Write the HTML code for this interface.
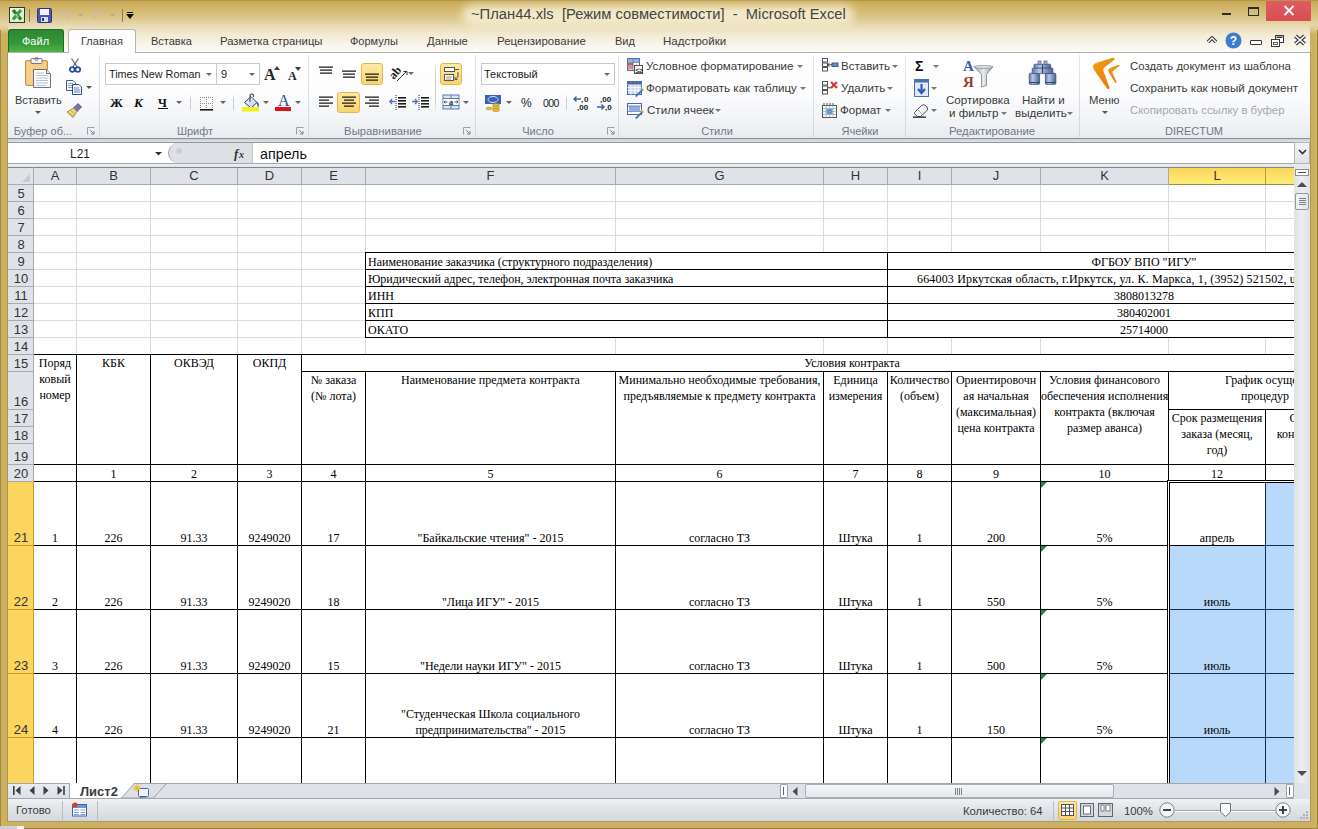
<!DOCTYPE html><html><head><meta charset="utf-8"><style>
html,body{margin:0;padding:0;width:1318px;height:829px;overflow:hidden;background:#cdb160}
div,svg{position:absolute}
div,svg{box-sizing:border-box}
</style></head><body>
<div style="left:0px;top:0px;width:1318px;height:52px;background:linear-gradient(to bottom,#a98c3f 0px,#c7a957 1.5px,#cdb060 4px,#d3b96f 10px,#dcc78b 18px,#e8dab3 26px,#f2e9d2 34px,#f8f4ea 44px,#fbfaf5 52px)"></div>
<div style="left:462px;top:5px;width:392px;height:20px;background:rgba(250,244,222,0.8);border-radius:10px;filter:blur(5px)"></div>
<div style="left:0px;top:24px;width:8px;height:805px;background:linear-gradient(to bottom,rgba(205,177,96,0) 0px,#cdb160 10px)"></div>
<div style="left:1310px;top:24px;width:8px;height:805px;background:linear-gradient(to bottom,rgba(205,177,96,0) 0px,#cdb160 10px)"></div>
<div style="left:0px;top:821px;width:1318px;height:8px;background:#cdb160"></div>
<div style="left:0px;top:30px;width:1px;height:799px;background:#a08a42"></div>
<div style="left:1317px;top:30px;width:1px;height:799px;background:#a08a42"></div>
<div style="left:7px;top:52px;width:1px;height:770px;background:#a99658"></div>
<div style="left:1310px;top:52px;width:1px;height:770px;background:#a99658"></div>
<div style="left:7px;top:821px;width:1304px;height:1px;background:#a99a66"></div>
<div style="left:0px;top:828px;width:1318px;height:1px;background:#a08040"></div>
<div style="left:0px;top:826px;width:17px;height:3px;background:#cfd3d8"></div>
<div style="left:17px;top:826px;width:7px;height:3px;background:#f2f2f0"></div>
<div style="left:471px;top:4px;font-family:'Liberation Sans', sans-serif;font-size:14.75px;line-height:20px;color:#46443c;white-space:pre;">~План44.xls  [Режим совместимости]  -  Microsoft Excel</div>
<div style="left:1266px;top:1px;width:45px;height:20px;background:linear-gradient(#df5c60,#d84d52)"></div>
<svg style="left:1283px;top:5px;" width="12" height="11" viewBox="0 0 12 11"><path d="M1.5 1L10.5 10M10.5 1L1.5 10" stroke="#fff" stroke-width="1.8"/></svg>
<div style="left:1248px;top:7px;width:11px;height:9px;border:1px solid #2b2b2b;border-top-width:2px"></div>
<div style="left:1222px;top:13px;width:9px;height:2px;background:#2b2b2b"></div>
<div style="left:8px;top:29px;width:56px;height:23px;background:linear-gradient(to bottom,#2b8733,#35973a 60%,#52b344);border-radius:3px 3px 0 0;border:1px solid #1d6b25;border-bottom:none"></div>
<div style="left:22px;top:31px;font-family:'Liberation Sans', sans-serif;font-size:11px;line-height:20px;color:#fff;white-space:pre;">Файл</div>
<div style="left:68px;top:29px;width:68px;height:24px;background:linear-gradient(to bottom,#fdfdfd,#ffffff);border:1px solid #b3b5b3;border-bottom:none;border-radius:3px 3px 0 0"></div>
<div style="left:81px;top:31px;font-family:'Liberation Sans', sans-serif;font-size:11px;line-height:20px;color:#3b3b3b;white-space:pre;">Главная</div>
<div style="left:151px;top:31px;font-family:'Liberation Sans', sans-serif;font-size:11px;line-height:20px;color:#3b3b3b;white-space:pre;">Вставка</div>
<div style="left:220px;top:31px;font-family:'Liberation Sans', sans-serif;font-size:11.3px;line-height:20px;color:#3b3b3b;white-space:pre;">Разметка страницы</div>
<div style="left:350px;top:31px;font-family:'Liberation Sans', sans-serif;font-size:11px;line-height:20px;color:#3b3b3b;white-space:pre;">Формулы</div>
<div style="left:427px;top:31px;font-family:'Liberation Sans', sans-serif;font-size:11.3px;line-height:20px;color:#3b3b3b;white-space:pre;">Данные</div>
<div style="left:497px;top:31px;font-family:'Liberation Sans', sans-serif;font-size:11.5px;line-height:20px;color:#3b3b3b;white-space:pre;">Рецензирование</div>
<div style="left:615px;top:31px;font-family:'Liberation Sans', sans-serif;font-size:11px;line-height:20px;color:#3b3b3b;white-space:pre;">Вид</div>
<div style="left:663px;top:31px;font-family:'Liberation Sans', sans-serif;font-size:11.5px;line-height:20px;color:#3b3b3b;white-space:pre;">Надстройки</div>
<svg style="left:1206px;top:35px;" width="12" height="10" viewBox="0 0 12 10"><path d="M2 7L6 3L10 7" stroke="#3a3a3a" stroke-width="3.6" fill="none" stroke-linejoin="round"/><path d="M2 7L6 3L10 7" stroke="#fff" stroke-width="1.4" fill="none"/></svg>
<svg style="left:1225px;top:32px;" width="17" height="17" viewBox="0 0 17 17"><circle cx="8.5" cy="8.5" r="8" fill="#3d7bd1"/><text x="8.5" y="13" font-family="Liberation Sans" font-weight="bold" font-size="12" fill="#fff" text-anchor="middle">?</text></svg>
<div style="left:1250px;top:40px;width:12px;height:5px;border:1px solid #333;background:#fff;border-radius:1px"></div>
<svg style="left:1270px;top:34px;" width="15" height="14" viewBox="0 0 15 14"><rect x="5.5" y="1.5" width="8" height="7" fill="#fff" stroke="#3a3a3a"/><rect x="6.5" y="2.5" width="6" height="1.5" fill="#3a3a3a"/><rect x="1.5" y="5.5" width="8" height="7" fill="#fff" stroke="#3a3a3a"/><rect x="3.5" y="8.5" width="4" height="2" fill="#fff" stroke="#3a3a3a" stroke-width="0.8"/></svg>
<svg style="left:1293px;top:34px;" width="14" height="12" viewBox="0 0 14 12"><path d="M2.5 2L11.5 10M11.5 2L2.5 10" stroke="#3a3a3a" stroke-width="3.8"/><path d="M2.5 2L11.5 10M11.5 2L2.5 10" stroke="#fff" stroke-width="1.6"/></svg>
<div style="left:8px;top:52px;width:1302px;height:87px;background:linear-gradient(to bottom,#ffffff 0%,#fdfdfe 45%,#f1f3f5 80%,#e9ecef 100%);border-top:1px solid #adb0b3;border-bottom:1px solid #8d9196"></div>
<div style="left:69px;top:52px;width:66px;height:1px;background:#fff"></div>
<div style="left:99px;top:55px;width:1px;height:82px;background:linear-gradient(to bottom,#e3e6ea,#d2d6db)"></div>
<div style="left:308px;top:55px;width:1px;height:82px;background:linear-gradient(to bottom,#e3e6ea,#d2d6db)"></div>
<div style="left:475px;top:55px;width:1px;height:82px;background:linear-gradient(to bottom,#e3e6ea,#d2d6db)"></div>
<div style="left:618px;top:55px;width:1px;height:82px;background:linear-gradient(to bottom,#e3e6ea,#d2d6db)"></div>
<div style="left:813px;top:55px;width:1px;height:82px;background:linear-gradient(to bottom,#e3e6ea,#d2d6db)"></div>
<div style="left:905px;top:55px;width:1px;height:82px;background:linear-gradient(to bottom,#e3e6ea,#d2d6db)"></div>
<div style="left:1079px;top:55px;width:1px;height:82px;background:linear-gradient(to bottom,#e3e6ea,#d2d6db)"></div>
<svg style="left:24px;top:57px;" width="28" height="32" viewBox="0 0 28 32"><rect x="1.5" y="3.5" width="22" height="25" rx="1.5" fill="#f2c46f" stroke="#c0924a"/><rect x="3" y="5" width="19" height="22" fill="#f6cf85"/><rect x="7" y="1.5" width="11" height="5" rx="1" fill="#f4f4f4" stroke="#7a7a7a"/><circle cx="12.5" cy="2" r="1.6" fill="none" stroke="#777"/><path d="M9.5 12.5H22.5L26.5 16.5V30.5H9.5Z" fill="#fdfdfd" stroke="#6f7378"/><path d="M22.5 12.5V16.5H26.5" fill="#e8e8e8" stroke="#6f7378"/><path d="M12 16H20M12 18.5H24M12 21H24M12 23.5H24M12 26H24M12 28.5H22" stroke="#9fb3cc" stroke-width="0.8"/></svg>
<div style="left:15px;top:89.5px;font-family:'Liberation Sans', sans-serif;font-size:11px;line-height:20px;color:#3a3a3a;white-space:pre;">Вставить</div>
<svg style="left:35px;top:110.5px" width="6" height="3" viewBox="0 0 6 3"><path d="M0 0H6L3 3Z" fill="#555"/></svg>
<svg style="left:69px;top:58px;" width="12" height="15" viewBox="0 0 12 15"><path d="M2.5 0.5L8.2 9M9.5 0.5L3.8 9" stroke="#6a6e74" stroke-width="1.3"/><circle cx="3.2" cy="11.5" r="2.4" fill="none" stroke="#2d4ea3" stroke-width="1.8"/><circle cx="8.8" cy="11.5" r="2.4" fill="none" stroke="#2d4ea3" stroke-width="1.8"/></svg>
<svg style="left:66px;top:80px;" width="17" height="15" viewBox="0 0 17 15"><path d="M0.5 0.5H7L9.5 3V10.5H0.5Z" fill="#fff" stroke="#3b5b9a"/><path d="M2 3.5H7M2 5.5H7M2 7.5H7" stroke="#6b89c2" stroke-width="0.8"/><path d="M6.5 4.5H13L15.5 7V14.5H6.5Z" fill="#f7f9fd" stroke="#2f4f8f"/><path d="M8 8H13M8 10H14M8 12H14" stroke="#5477c0" stroke-width="0.9"/></svg>
<svg style="left:86px;top:86.0px" width="6" height="3" viewBox="0 0 6 3"><path d="M0 0H6L3 3Z" fill="#555"/></svg>
<svg style="left:66px;top:101px;" width="18" height="17" viewBox="0 0 18 17"><path d="M12 2.5L15.5 6L11 10.5L7.5 7Z" fill="#7f6fb0" stroke="#4c3f7c" stroke-width="0.8"/><path d="M7.5 7L11 10.5L7 16.5L1 11Z" fill="#e9dc7e" stroke="#8c7a34" stroke-width="0.8"/><path d="M3 12L7.5 15M5 10L9.5 13" stroke="#b9a64a" stroke-width="0.8"/></svg>
<div style="left:-57px;top:121px;font-family:'Liberation Sans', sans-serif;font-size:11px;line-height:20px;color:#6e7886;white-space:pre;width:200px;text-align:center;">Буфер об...</div>
<svg style="left:87px;top:127px;" width="8" height="8" viewBox="0 0 8 8"><path d="M0.5 7.5V0.5H7.5" stroke="#98a0a8" fill="none"/><path d="M3 3L7 7M7 4V7H4" stroke="#7d858e" fill="none"/></svg>
<div style="left:105px;top:63px;width:112px;height:22px;background:#fff;border:1px solid #c6cad0"></div>
<div style="left:216px;top:63px;width:44px;height:22px;background:#fff;border:1px solid #c6cad0"></div>
<div style="left:109px;top:64px;font-family:'Liberation Sans', sans-serif;font-size:10.8px;line-height:20px;color:#1b1b1b;white-space:pre;">Times New Roman</div>
<svg style="left:206px;top:72.5px" width="6" height="3" viewBox="0 0 6 3"><path d="M0 0H6L3 3Z" fill="#6a6a6a"/></svg>
<div style="left:221px;top:64px;font-family:'Liberation Sans', sans-serif;font-size:11px;line-height:20px;color:#1b1b1b;white-space:pre;">9</div>
<svg style="left:249px;top:72.5px" width="6" height="3" viewBox="0 0 6 3"><path d="M0 0H6L3 3Z" fill="#6a6a6a"/></svg>
<div style="left:264px;top:65px;font-family:'Liberation Serif', serif;font-size:16px;line-height:20px;color:#262626;white-space:pre;font-weight:bold;">A</div>
<svg style="left:274px;top:66px;" width="6" height="4" viewBox="0 0 6 4"><path d="M0 4L3 0L6 4Z" fill="#3d3d3d"/></svg>
<div style="left:288px;top:66px;font-family:'Liberation Serif', serif;font-size:12px;line-height:20px;color:#262626;white-space:pre;font-weight:bold;">A</div>
<svg style="left:295px;top:67px;" width="6" height="4" viewBox="0 0 6 4"><path d="M0 0H6L3 4Z" fill="#3d3d3d"/></svg>
<div style="left:110px;top:92.5px;font-family:'Liberation Serif', serif;font-size:13px;line-height:20px;color:#111;white-space:pre;font-weight:bold;">Ж</div>
<div style="left:134px;top:92.5px;font-family:'Liberation Serif', serif;font-size:13px;line-height:20px;color:#111;white-space:pre;font-weight:bold;font-style:italic">К</div>
<div style="left:158px;top:92.5px;font-family:'Liberation Serif', serif;font-size:12px;line-height:20px;color:#111;white-space:pre;font-weight:bold;">Ч</div>
<div style="left:158px;top:108px;width:10px;height:1px;background:#111"></div>
<svg style="left:175.5px;top:100.5px" width="6" height="3" viewBox="0 0 6 3"><path d="M0 0H6L3 3Z" fill="#666"/></svg>
<div style="left:190px;top:95px;width:1px;height:17px;background:linear-gradient(to bottom,rgba(200,205,210,0),#c8cdd2 20%,#c8cdd2 80%,rgba(200,205,210,0))"></div>
<svg style="left:199px;top:96px;" width="15" height="15" viewBox="0 0 15 15"><path d="M1.5 1V14M7.5 1V14M13.5 1V14M1 1.5H14M1 7.5H14" stroke="#8c8c8c" stroke-width="1" stroke-dasharray="1 1"/><rect x="1" y="13" width="13" height="1.6" fill="#1a1a1a"/></svg>
<svg style="left:219.5px;top:100.5px" width="6" height="3" viewBox="0 0 6 3"><path d="M0 0H6L3 3Z" fill="#666"/></svg>
<div style="left:233px;top:95px;width:1px;height:17px;background:linear-gradient(to bottom,rgba(200,205,210,0),#c8cdd2 20%,#c8cdd2 80%,rgba(200,205,210,0))"></div>
<svg style="left:241px;top:93px;" width="19" height="19" viewBox="0 0 19 19"><defs><linearGradient id="bk" x1="0" y1="0" x2="1" y2="1"><stop offset="0" stop-color="#f4f8fd"/><stop offset="1" stop-color="#b9cde8"/></linearGradient></defs><path d="M3.5 9.5L10 3.5L16 9.5L10 15Z" fill="url(#bk)" stroke="#2d3d66" stroke-width="1"/><path d="M9 9V3Q9 0.8 11 1Q13 1.2 12.5 4" stroke="#3a4466" stroke-width="1.1" fill="none"/><path d="M15.5 8.5Q18.5 10 17.8 13.5L16.8 14L16 11Z" fill="#3f52c8"/><rect x="1" y="14" width="17" height="4.5" fill="#f0f01c"/></svg>
<svg style="left:262.5px;top:100.5px" width="6" height="3" viewBox="0 0 6 3"><path d="M0 0H6L3 3Z" fill="#666"/></svg>
<div style="left:278px;top:90.5px;font-family:'Liberation Serif', serif;font-size:16px;line-height:20px;color:#2a4d8f;white-space:pre;">A</div>
<div style="left:275px;top:107px;width:16px;height:4px;background:#e0101a"></div>
<svg style="left:295px;top:100.5px" width="6" height="3" viewBox="0 0 6 3"><path d="M0 0H6L3 3Z" fill="#666"/></svg>
<div style="left:95px;top:121px;font-family:'Liberation Sans', sans-serif;font-size:11px;line-height:20px;color:#6e7886;white-space:pre;width:200px;text-align:center;">Шрифт</div>
<svg style="left:296px;top:127px;" width="8" height="8" viewBox="0 0 8 8"><path d="M0.5 7.5V0.5H7.5" stroke="#98a0a8" fill="none"/><path d="M3 3L7 7M7 4V7H4" stroke="#7d858e" fill="none"/></svg>
<svg style="left:319px;top:66px;" width="20" height="20" viewBox="0 0 20 20"><rect x="0" y="0.5" width="14" height="1.25" fill="#1a1a1a"/><rect x="1" y="3.5" width="12" height="1.25" fill="#1a1a1a"/><rect x="1" y="6.5" width="12" height="1.25" fill="#1a1a1a"/></svg>
<svg style="left:342px;top:70px;" width="20" height="20" viewBox="0 0 20 20"><rect x="0" y="0.5" width="14" height="1.25" fill="#1a1a1a"/><rect x="1" y="3.5" width="12" height="1.25" fill="#1a1a1a"/><rect x="1" y="6.5" width="12" height="1.25" fill="#1a1a1a"/></svg>
<div style="left:361px;top:63px;width:22px;height:22px;background:linear-gradient(to bottom,#fde9a6,#f9d46c);border:1px solid #e1b552;border-radius:3px"></div>
<svg style="left:365px;top:73px;" width="20" height="20" viewBox="0 0 20 20"><rect x="0" y="0.5" width="14" height="1.25" fill="#1a1a1a"/><rect x="1" y="3.5" width="12" height="1.25" fill="#1a1a1a"/><rect x="1" y="6.5" width="12" height="1.25" fill="#1a1a1a"/></svg>
<svg style="left:390px;top:66px;" width="26" height="17" viewBox="0 0 26 17"><text x="0" y="0" font-family="Liberation Serif" font-size="12" font-weight="bold" fill="#222" transform="translate(4,14) rotate(-50)">ab</text><path d="M7 15L16 6" stroke="#333" stroke-width="1"/><path d="M13.5 5.5H17V9" stroke="#333" fill="none"/></svg>
<svg style="left:407.5px;top:71.5px" width="6" height="3" viewBox="0 0 6 3"><path d="M0 0H6L3 3Z" fill="#666"/></svg>
<div style="left:435px;top:63px;width:1px;height:49px;background:linear-gradient(to bottom,rgba(200,205,210,0),#c8cdd2 20%,#c8cdd2 80%,rgba(200,205,210,0))"></div>
<div style="left:440px;top:63px;width:22px;height:22px;background:linear-gradient(to bottom,#fde9a6,#f9d46c);border:1px solid #e1b552;border-radius:3px"></div>
<svg style="left:443px;top:66px;" width="17" height="16" viewBox="0 0 17 16"><rect x="1.5" y="1.5" width="10" height="4" fill="#fff" stroke="#555"/><path d="M11.5 3.5H16" stroke="#555"/><rect x="1.5" y="8.5" width="9" height="6" fill="#fff" stroke="#555"/><path d="M3 11H9M3 13H8" stroke="#777" stroke-width="0.8"/><path d="M15 6V11L12.5 13" stroke="#555" fill="none"/><path d="M12 11V13.5H14.5" stroke="#555" fill="none"/></svg>
<svg style="left:319px;top:96px;" width="20" height="20" viewBox="0 0 20 20"><rect x="0" y="0.5" width="14" height="1.25" fill="#1a1a1a"/><rect x="0" y="3.5" width="10" height="1.25" fill="#1a1a1a"/><rect x="0" y="6.5" width="14" height="1.25" fill="#1a1a1a"/><rect x="0" y="9.5" width="10" height="1.25" fill="#1a1a1a"/></svg>
<div style="left:337px;top:92px;width:23px;height:21px;background:linear-gradient(to bottom,#fde9a6,#f9d46c);border:1px solid #e1b552;border-radius:3px"></div>
<svg style="left:342px;top:96px;" width="20" height="20" viewBox="0 0 20 20"><rect x="0" y="0.5" width="14" height="1.25" fill="#1a1a1a"/><rect x="2" y="3.5" width="10" height="1.25" fill="#1a1a1a"/><rect x="0" y="6.5" width="14" height="1.25" fill="#1a1a1a"/><rect x="2" y="9.5" width="10" height="1.25" fill="#1a1a1a"/></svg>
<svg style="left:365px;top:96px;" width="20" height="20" viewBox="0 0 20 20"><rect x="0" y="0.5" width="14" height="1.25" fill="#1a1a1a"/><rect x="4" y="3.5" width="10" height="1.25" fill="#1a1a1a"/><rect x="0" y="6.5" width="14" height="1.25" fill="#1a1a1a"/><rect x="4" y="9.5" width="10" height="1.25" fill="#1a1a1a"/></svg>
<svg style="left:389px;top:94px;" width="18" height="17" viewBox="0 0 18 17"><path d="M7 1V16" stroke="#222" stroke-dasharray="1 1"/><rect x="9" y="3" width="8" height="1.6" fill="#1a1a1a"/><rect x="9" y="6" width="8" height="1.6" fill="#1a1a1a"/><rect x="9" y="9" width="8" height="1.6" fill="#1a1a1a"/><rect x="9" y="12" width="8" height="1.6" fill="#1a1a1a"/><path d="M1 7.5H6M3 5L0.8 7.5L3 10" stroke="#4a72c0" stroke-width="1.3" fill="none"/></svg>
<svg style="left:412px;top:94px;" width="18" height="17" viewBox="0 0 18 17"><path d="M7 1V16" stroke="#222" stroke-dasharray="1 1"/><rect x="9" y="3" width="8" height="1.6" fill="#1a1a1a"/><rect x="9" y="6" width="8" height="1.6" fill="#1a1a1a"/><rect x="9" y="9" width="8" height="1.6" fill="#1a1a1a"/><rect x="9" y="12" width="8" height="1.6" fill="#1a1a1a"/><path d="M0 7.5H5M3 5L5.3 7.5L3 10" stroke="#4a72c0" stroke-width="1.3" fill="none"/></svg>
<svg style="left:442px;top:94px;" width="18" height="16" viewBox="0 0 18 16"><rect x="1" y="1" width="16" height="14" fill="#dbe6f5" stroke="#5a7bb0"/><path d="M1 4.5H17M1 11.5H17M9 1V4.5M9 11.5V15" stroke="#5a7bb0"/><rect x="1.5" y="5" width="15" height="6" fill="#fff"/><text x="9" y="10.5" font-family="Liberation Serif" font-size="9" font-weight="bold" fill="#333" text-anchor="middle">a</text><path d="M2 8H5.5M12.5 8H16M2 8L3.5 6.8M2 8L3.5 9.2M16 8L14.5 6.8M16 8L14.5 9.2" stroke="#333" stroke-width="0.8"/></svg>
<svg style="left:462.5px;top:100.5px" width="6" height="3" viewBox="0 0 6 3"><path d="M0 0H6L3 3Z" fill="#666"/></svg>
<div style="left:283px;top:121px;font-family:'Liberation Sans', sans-serif;font-size:11.3px;line-height:20px;color:#6e7886;white-space:pre;width:200px;text-align:center;">Выравнивание</div>
<svg style="left:463px;top:127px;" width="8" height="8" viewBox="0 0 8 8"><path d="M0.5 7.5V0.5H7.5" stroke="#98a0a8" fill="none"/><path d="M3 3L7 7M7 4V7H4" stroke="#7d858e" fill="none"/></svg>
<div style="left:481px;top:63px;width:134px;height:22px;background:#fff;border:1px solid #c6cad0"></div>
<div style="left:484px;top:64px;font-family:'Liberation Sans', sans-serif;font-size:11px;line-height:20px;color:#1b1b1b;white-space:pre;">Текстовый</div>
<svg style="left:604px;top:72.5px" width="6" height="3" viewBox="0 0 6 3"><path d="M0 0H6L3 3Z" fill="#6a6a6a"/></svg>
<svg style="left:484px;top:94px;" width="18" height="18" viewBox="0 0 18 18"><rect x="1" y="1" width="16" height="9" fill="#3b63b5"/><ellipse cx="9" cy="5.5" rx="5" ry="3" fill="none" stroke="#cfe0ff" stroke-width="1"/><ellipse cx="12" cy="11" rx="3.5" ry="1.5" fill="#e9c23a" stroke="#a98419" stroke-width="0.6"/><ellipse cx="12" cy="13.5" rx="3.5" ry="1.5" fill="#e9c23a" stroke="#a98419" stroke-width="0.6"/><ellipse cx="12" cy="16" rx="3.5" ry="1.5" fill="#e9c23a" stroke="#a98419" stroke-width="0.6"/><ellipse cx="5" cy="14.5" rx="3" ry="1.3" fill="#e9c23a" stroke="#a98419" stroke-width="0.6"/></svg>
<svg style="left:506px;top:100.5px" width="6" height="3" viewBox="0 0 6 3"><path d="M0 0H6L3 3Z" fill="#666"/></svg>
<div style="left:521px;top:93px;font-family:'Liberation Sans', sans-serif;font-size:12px;line-height:20px;color:#222;white-space:pre;">%</div>
<div style="left:543px;top:93px;font-family:'Liberation Sans', sans-serif;font-size:10.5px;line-height:20px;color:#222;white-space:pre;letter-spacing:-0.6px;">000</div>
<div style="left:566px;top:95px;width:1px;height:17px;background:linear-gradient(to bottom,rgba(200,205,210,0),#c8cdd2 20%,#c8cdd2 80%,rgba(200,205,210,0))"></div>
<svg style="left:573px;top:95px;" width="18" height="16" viewBox="0 0 18 16"><text x="11" y="7" font-family="Liberation Sans" font-size="8" font-weight="bold" fill="#222">0</text><text x="4" y="15" font-family="Liberation Sans" font-size="8" font-weight="bold" fill="#222">,00</text><path d="M1 4H8M3.5 1.5L1 4L3.5 6.5" stroke="#3a5fb0" stroke-width="1.4" fill="none"/><text x="8" y="7" font-family="Liberation Sans" font-size="8" font-weight="bold" fill="#222">,</text></svg>
<svg style="left:596px;top:95px;" width="18" height="16" viewBox="0 0 18 16"><text x="4" y="7" font-family="Liberation Sans" font-size="8" font-weight="bold" fill="#222">,00</text><text x="9" y="15" font-family="Liberation Sans" font-size="8" font-weight="bold" fill="#222">,0</text><path d="M1 12H8M5.5 9.5L8 12L5.5 14.5" stroke="#3a5fb0" stroke-width="1.4" fill="none"/></svg>
<div style="left:438px;top:121px;font-family:'Liberation Sans', sans-serif;font-size:11px;line-height:20px;color:#6e7886;white-space:pre;width:200px;text-align:center;">Число</div>
<svg style="left:607px;top:127px;" width="8" height="8" viewBox="0 0 8 8"><path d="M0.5 7.5V0.5H7.5" stroke="#98a0a8" fill="none"/><path d="M3 3L7 7M7 4V7H4" stroke="#7d858e" fill="none"/></svg>
<svg style="left:626px;top:57px;" width="18" height="18" viewBox="0 0 18 18"><rect x="1.5" y="1.5" width="12" height="12" fill="#fff" stroke="#5a6f95"/><rect x="2" y="2" width="11" height="3" fill="#8fb0e0"/><rect x="2" y="6" width="5" height="2.5" fill="#d9534f"/><rect x="2" y="9.5" width="5" height="3" fill="#e08a86"/><path d="M1.5 5.5H13.5M1.5 9H13.5M7 1.5V13.5" stroke="#5a6f95" stroke-width="0.7"/><rect x="8.5" y="8.5" width="8" height="8" fill="#fff" stroke="#555"/><text x="9.5" y="15.5" font-family="Liberation Sans" font-size="7" font-weight="bold" fill="#333">≤≥</text></svg>
<div style="left:646px;top:56px;font-family:'Liberation Sans', sans-serif;font-size:11.6px;line-height:20px;color:#3a3a3a;white-space:pre;">Условное форматирование</div>
<svg style="left:797px;top:64.5px" width="6" height="3" viewBox="0 0 6 3"><path d="M0 0H6L3 3Z" fill="#777"/></svg>
<svg style="left:626px;top:80px;" width="18" height="18" viewBox="0 0 18 18"><rect x="1.5" y="1.5" width="14" height="13" fill="#c9d9f2" stroke="#4d6aa3"/><path d="M1.5 4.5H15.5M1.5 7.5H15.5M1.5 10.5H15.5M5 1.5V14.5M9 1.5V14.5M12.5 1.5V14.5" stroke="#fff" stroke-width="0.8"/><rect x="1.5" y="1.5" width="14" height="3" fill="#4d6aa3"/><path d="M9 16L16 9L17 10.5L10.5 17Z" fill="#3f6cc2"/><path d="M15 8L17.5 10.5" stroke="#8ac04a" stroke-width="1.5"/></svg>
<div style="left:646px;top:77.5px;font-family:'Liberation Sans', sans-serif;font-size:11.6px;line-height:20px;color:#3a3a3a;white-space:pre;">Форматировать как таблицу</div>
<svg style="left:800px;top:86.5px" width="6" height="3" viewBox="0 0 6 3"><path d="M0 0H6L3 3Z" fill="#777"/></svg>
<svg style="left:626px;top:102px;" width="18" height="18" viewBox="0 0 18 18"><rect x="1.5" y="1.5" width="14" height="11" fill="#fff" stroke="#4d6aa3"/><rect x="3" y="4" width="11" height="5" fill="#8fb0e0"/><path d="M1.5 4H15.5M1.5 9.5H15.5" stroke="#4d6aa3" stroke-width="0.7"/><path d="M9 16L16 9L17 10.5L10.5 17Z" fill="#3f6cc2"/><path d="M15 8L17.5 10.5" stroke="#e0b040" stroke-width="1.5"/></svg>
<div style="left:647px;top:99.5px;font-family:'Liberation Sans', sans-serif;font-size:11.6px;line-height:20px;color:#3a3a3a;white-space:pre;">Стили ячеек</div>
<svg style="left:715px;top:108.5px" width="6" height="3" viewBox="0 0 6 3"><path d="M0 0H6L3 3Z" fill="#777"/></svg>
<div style="left:617px;top:121px;font-family:'Liberation Sans', sans-serif;font-size:11px;line-height:20px;color:#6e7886;white-space:pre;width:200px;text-align:center;">Стили</div>
<svg style="left:821px;top:57px;" width="18" height="16" viewBox="0 0 18 16"><rect x="1.5" y="1.5" width="5" height="3.5" fill="#fff" stroke="#555"/><rect x="1.5" y="6" width="5" height="3.5" fill="#fff" stroke="#555"/><rect x="1.5" y="10.5" width="5" height="3.5" fill="#fff" stroke="#555"/><rect x="11" y="6" width="6" height="3.5" fill="#5b8bd0" stroke="#3a5f9a"/><path d="M6.5 7.8H11M8.5 6L6.5 7.8L8.5 9.5" stroke="#333" fill="none" stroke-width="0.9"/></svg>
<div style="left:841px;top:56px;font-family:'Liberation Sans', sans-serif;font-size:11.6px;line-height:20px;color:#3a3a3a;white-space:pre;">Вставить</div>
<svg style="left:892px;top:64.5px" width="6" height="3" viewBox="0 0 6 3"><path d="M0 0H6L3 3Z" fill="#777"/></svg>
<svg style="left:821px;top:80px;" width="18" height="16" viewBox="0 0 18 16"><rect x="1.5" y="1.5" width="5" height="3.5" fill="#fff" stroke="#555"/><rect x="1.5" y="6" width="5" height="3.5" fill="#fff" stroke="#555"/><rect x="1.5" y="10.5" width="5" height="3.5" fill="#fff" stroke="#555"/><path d="M6.5 7.8H10" stroke="#333"/><path d="M10 2L16 8M16 2L10 8" stroke="#e02b2b" stroke-width="2"/></svg>
<div style="left:841px;top:77.5px;font-family:'Liberation Sans', sans-serif;font-size:11.6px;line-height:20px;color:#3a3a3a;white-space:pre;">Удалить</div>
<svg style="left:887px;top:86.5px" width="6" height="3" viewBox="0 0 6 3"><path d="M0 0H6L3 3Z" fill="#777"/></svg>
<svg style="left:821px;top:102px;" width="17" height="17" viewBox="0 0 17 17"><rect x="1.5" y="3.5" width="14" height="12" fill="#fff" stroke="#555"/><path d="M1.5 6.5H15.5M1.5 9.5H15.5M1.5 12.5H15.5M5 3.5V15.5M8.5 3.5V15.5M12 3.5V15.5" stroke="#8aa" stroke-width="0.7"/><rect x="5.5" y="7" width="6" height="5" fill="#6f95d8"/><path d="M3 1V3M6 1V3M9 1V3M12 1V3" stroke="#555"/></svg>
<div style="left:840px;top:99.5px;font-family:'Liberation Sans', sans-serif;font-size:11.6px;line-height:20px;color:#3a3a3a;white-space:pre;">Формат</div>
<svg style="left:885px;top:108.5px" width="6" height="3" viewBox="0 0 6 3"><path d="M0 0H6L3 3Z" fill="#777"/></svg>
<div style="left:760px;top:121px;font-family:'Liberation Sans', sans-serif;font-size:11px;line-height:20px;color:#6e7886;white-space:pre;width:200px;text-align:center;">Ячейки</div>
<div style="left:915px;top:56px;font-family:'Liberation Sans', sans-serif;font-size:14px;line-height:20px;color:#111;white-space:pre;font-weight:bold;">Σ</div>
<svg style="left:933px;top:64.5px" width="6" height="3" viewBox="0 0 6 3"><path d="M0 0H6L3 3Z" fill="#777"/></svg>
<svg style="left:914px;top:79px;" width="15" height="18" viewBox="0 0 15 18"><rect x="0.5" y="0.5" width="14" height="17" fill="#dfe9f7" stroke="#4a6fb0"/><rect x="0.5" y="0.5" width="14" height="3" fill="#4a6fb0"/><path d="M7.5 5V13M4 10L7.5 14L11 10" stroke="#2d5cc0" stroke-width="2.2" fill="none"/></svg>
<svg style="left:931px;top:86.5px" width="6" height="3" viewBox="0 0 6 3"><path d="M0 0H6L3 3Z" fill="#777"/></svg>
<svg style="left:912px;top:102px;" width="18" height="16" viewBox="0 0 18 16"><path d="M2.5 10.5L9.5 3.5Q11.5 1.8 13.5 3.5L15 5Q16.5 7 14.8 8.8L8.5 14.5H5.5L2.5 11.8Z" fill="#f2f4f7" stroke="#4a4f57" stroke-width="1"/><path d="M5.5 7.5L10.5 12.5" stroke="#8a9098" stroke-width="0.8"/><rect x="1" y="14.5" width="13" height="1.3" fill="#222"/></svg>
<svg style="left:931px;top:108.5px" width="6" height="3" viewBox="0 0 6 3"><path d="M0 0H6L3 3Z" fill="#777"/></svg>
<svg style="left:961px;top:57px;" width="34" height="32" viewBox="0 0 34 32"><defs><linearGradient id="fn" x1="0" y1="0" x2="1" y2="0"><stop offset="0" stop-color="#9aa0a8"/><stop offset="0.5" stop-color="#e9ecef"/><stop offset="1" stop-color="#8d939b"/></linearGradient></defs><path d="M13 9.5H32L25.5 17.5V28.5L20.5 30V17.5Z" fill="url(#fn)" stroke="#7d838b" stroke-width="0.8"/><ellipse cx="22.5" cy="10" rx="9.5" ry="1.6" fill="#d5d9de" stroke="#7d838b" stroke-width="0.6"/><text x="2" y="14" font-family="Liberation Serif" font-size="15" font-weight="bold" fill="#3460b0">A</text><text x="2" y="30" font-family="Liberation Serif" font-size="15" font-weight="bold" fill="#9c3a2a">Я</text></svg>
<div style="left:946px;top:90px;font-family:'Liberation Sans', sans-serif;font-size:11.6px;line-height:20px;color:#3a3a3a;white-space:pre;">Сортировка</div>
<div style="left:949px;top:103px;font-family:'Liberation Sans', sans-serif;font-size:11.6px;line-height:20px;color:#3a3a3a;white-space:pre;">и фильтр</div>
<svg style="left:1001px;top:111.5px" width="6" height="3" viewBox="0 0 6 3"><path d="M0 0H6L3 3Z" fill="#777"/></svg>
<svg style="left:1028px;top:60px;" width="29" height="26" viewBox="0 0 29 26"><defs><linearGradient id="bn" x1="0" y1="0" x2="1" y2="0"><stop offset="0" stop-color="#6177a6"/><stop offset="0.35" stop-color="#b9c8e4"/><stop offset="1" stop-color="#4b6090"/></linearGradient></defs><rect x="1.2" y="13.1" width="10.4" height="11.3" rx="1.5" fill="url(#bn)" stroke="#34497a" stroke-width="0.7"/><rect x="17.3" y="13.1" width="10.6" height="11.3" rx="1.5" fill="url(#bn)" stroke="#34497a" stroke-width="0.7"/><rect x="4.2" y="7.9" width="20.7" height="5.7" rx="1" fill="url(#bn)" stroke="#34497a" stroke-width="0.7"/><rect x="6" y="4.2" width="16.7" height="3.8" rx="1" fill="url(#bn)" stroke="#34497a" stroke-width="0.7"/><rect x="10" y="1" width="3" height="3.2" fill="#aab8d8" stroke="#34497a" stroke-width="0.6"/><rect x="16" y="1" width="3" height="3.2" fill="#aab8d8" stroke="#34497a" stroke-width="0.6"/><path d="M14.5 4.5V13" stroke="#2a3b66" stroke-width="1"/><path d="M1.5 22.5H11.5M17.5 22.5H27.5" stroke="#2f416d" stroke-width="1.2"/></svg>
<div style="left:1022px;top:90px;font-family:'Liberation Sans', sans-serif;font-size:11.6px;line-height:20px;color:#3a3a3a;white-space:pre;">Найти и</div>
<div style="left:1015px;top:103px;font-family:'Liberation Sans', sans-serif;font-size:11.6px;line-height:20px;color:#3a3a3a;white-space:pre;">выделить</div>
<svg style="left:1067px;top:111.5px" width="6" height="3" viewBox="0 0 6 3"><path d="M0 0H6L3 3Z" fill="#777"/></svg>
<div style="left:892px;top:121px;font-family:'Liberation Sans', sans-serif;font-size:11.3px;line-height:20px;color:#6e7886;white-space:pre;width:200px;text-align:center;">Редактирование</div>
<svg style="left:1088px;top:54px;" width="36" height="40" viewBox="0 0 36 40"><defs><linearGradient id="og" x1="0" y1="0" x2="0.6" y2="1"><stop offset="0" stop-color="#f39c12"/><stop offset="1" stop-color="#e8800c"/></linearGradient></defs><path d="M26.5 5.5Q27.5 3 24 4L8 9Q4 10.5 5.5 15L19 34.5Q21.5 36.5 21.5 33.5L15.5 17Q14.5 14.5 17 13Z" fill="url(#og)"/><path d="M31.5 12Q32.5 10.5 30 11L22 14Q19.5 15 20.5 18L27 28.5Q28.8 29.5 28.3 27.5L24.5 19Q24 17 25.5 16.5Z" fill="url(#og)"/></svg>
<div style="left:1089px;top:90px;font-family:'Liberation Sans', sans-serif;font-size:11.3px;line-height:20px;color:#3a3a3a;white-space:pre;">Меню</div>
<svg style="left:1102px;top:110.5px" width="6" height="3" viewBox="0 0 6 3"><path d="M0 0H6L3 3Z" fill="#555"/></svg>
<div style="left:1130px;top:56px;font-family:'Liberation Sans', sans-serif;font-size:11.4px;line-height:20px;color:#3a3a3a;white-space:pre;">Создать документ из шаблона</div>
<div style="left:1130px;top:77.5px;font-family:'Liberation Sans', sans-serif;font-size:11.6px;line-height:20px;color:#3a3a3a;white-space:pre;">Сохранить как новый документ</div>
<div style="left:1130px;top:99.5px;font-family:'Liberation Sans', sans-serif;font-size:11.4px;line-height:20px;color:#a3a8ae;white-space:pre;">Скопировать ссылку в буфер</div>
<div style="left:1094px;top:121px;font-family:'Liberation Sans', sans-serif;font-size:11px;line-height:20px;color:#6e7886;white-space:pre;width:200px;text-align:center;">DIRECTUM</div>
<svg style="left:9px;top:7px;" width="16" height="16" viewBox="0 0 16 16"><defs><linearGradient id="xg" x1="0" y1="0" x2="1" y2="1"><stop offset="0" stop-color="#f4fcef"/><stop offset="1" stop-color="#cdeec2"/></linearGradient></defs><rect x="0.5" y="0.5" width="15" height="15" fill="url(#xg)" stroke="#2f3a2a"/><path d="M4 3L12 12.5" stroke="#2a7a30" stroke-width="3.2"/><path d="M12 3L4 12.5" stroke="#3f9a45" stroke-width="3"/><path d="M6.5 7L9.5 10.5" stroke="#9be08a" stroke-width="1.2"/></svg>
<div style="left:29px;top:9px;width:1px;height:13px;background:#8d7a52"></div>
<svg style="left:37px;top:8px;" width="15" height="15" viewBox="0 0 15 15"><rect x="0.5" y="0.5" width="14" height="14" rx="1" fill="#4a53b8" stroke="#2e3383"/><rect x="3" y="1" width="9" height="6" fill="#f2f2f7"/><rect x="4" y="9" width="7" height="5" fill="#dcdff0"/><rect x="5" y="10" width="2" height="3" fill="#2e3383"/></svg>
<svg style="left:59px;top:9px;" width="13" height="12" viewBox="0 0 13 12"><path d="M3 5Q6 1 9.5 3.5Q12 6 9 10" stroke="#c8bfa4" stroke-width="2.2" fill="none"/><path d="M0.5 2L4 7L6.5 2.5Z" fill="#c8bfa4"/></svg>
<svg style="left:77.5px;top:13.8px" width="5.0" height="2.5" viewBox="0 0 5.0 2.5"><path d="M0 0H5.0L2.5 2.5Z" fill="#b0a68a"/></svg>
<svg style="left:91px;top:9px;" width="13" height="12" viewBox="0 0 13 12"><path d="M10 5Q7 1 3.5 3.5Q1 6 4 10" stroke="#c8bfa4" stroke-width="2.2" fill="none"/><path d="M12.5 2L9 7L6.5 2.5Z" fill="#c8bfa4"/></svg>
<svg style="left:109.5px;top:13.8px" width="5.0" height="2.5" viewBox="0 0 5.0 2.5"><path d="M0 0H5.0L2.5 2.5Z" fill="#b0a68a"/></svg>
<div style="left:122px;top:9px;width:1px;height:13px;background:#8d7a52"></div>
<div style="left:127px;top:12px;width:6px;height:1px;background:#111"></div>
<svg style="left:126px;top:14px;" width="8" height="5" viewBox="0 0 8 5"><path d="M0 0H8L4 5Z" fill="#111"/></svg>
<div style="left:8px;top:139px;width:1302px;height:29px;background:linear-gradient(to bottom,#c9cdd2 0px,#e1e4ea 3px,#e1e4ea 25px,#f4f5f7 25px,#e5e7ea 26px)"></div>
<div style="left:8px;top:142px;width:1286px;height:22px;background:#fff;border-top:1px solid #92979d;border-bottom:1px solid #a3a8ae"></div>
<div style="left:70px;top:144px;font-family:'Liberation Sans', sans-serif;font-size:12px;line-height:20px;color:#1e1e1e;white-space:pre;">L21</div>
<svg style="left:154.5px;top:152.2px" width="7.0" height="3.5" viewBox="0 0 7.0 3.5"><path d="M0 0H7.0L3.5 3.5Z" fill="#333"/></svg>
<div style="left:168px;top:143px;width:85px;height:20px;background:#dde1e6;border-radius:10px 0 0 10px;border-left:1px solid #9ba0a6;border-right:1px solid #c3c7cc"></div>
<div style="left:174px;top:147px;width:10px;height:10px;background:radial-gradient(circle at 50% 40%,#bfc3c8,#e7e9ec 70%);border-radius:50%"></div>
<div style="left:234px;top:144px;font-family:'Liberation Serif', serif;font-size:13px;line-height:20px;color:#333;white-space:pre;font-style:italic;font-weight:bold">f</div>
<div style="left:239px;top:145px;font-family:'Liberation Serif', serif;font-size:10px;line-height:20px;color:#333;white-space:pre;font-style:italic;font-weight:bold">x</div>
<div style="left:260px;top:144px;font-family:'Liberation Sans', sans-serif;font-size:14.3px;line-height:20px;color:#111;white-space:pre;">апрель</div>
<div style="left:1294px;top:142px;width:16px;height:22px;background:linear-gradient(#f3f4f6,#dfe2e6);border:1px solid #b1b5ba"></div>
<svg style="left:1298px;top:149px;" width="9" height="6" viewBox="0 0 9 6"><path d="M1 1L4.5 4.5L8 1" stroke="#333" stroke-width="1.6" fill="none"/></svg>
<div style="left:8px;top:167px;width:1286px;height:18px;background:#dfe3e8"></div>
<div style="left:8px;top:167px;width:1286px;height:1px;background:#80858b"></div>
<div style="left:8px;top:184px;width:1286px;height:1px;background:#a7abb0"></div>
<div style="left:33px;top:167px;width:1px;height:616px;background:#a7abb0"></div>
<svg style="left:22px;top:174px;" width="8" height="8" viewBox="0 0 8 8"><path d="M8 0V8H0Z" fill="#c6cacf"/></svg>
<div style="left:8px;top:185px;width:25px;height:598px;background:#dfe3e8"></div>
<div style="left:1169px;top:168px;width:125px;height:16px;background:linear-gradient(to bottom,#fcd45a,#fde46c 60%,#fdeb78)"></div>
<div style="left:1169px;top:184px;width:125px;height:1px;background:#9c8c4c"></div>
<div style="left:1169px;top:167px;width:125px;height:1px;background:#8a8770"></div>
<div style="left:1168px;top:168px;width:1px;height:16px;background:#c9a042"></div>
<div style="left:1265px;top:168px;width:1px;height:16px;background:#b39a4a"></div>
<div style="left:76px;top:168px;width:1px;height:16px;background:#a7abb0"></div>
<div style="left:34px;top:166px;font-family:'Liberation Sans', sans-serif;font-size:13px;line-height:20px;color:#333;white-space:pre;width:42px;text-align:center;">A</div>
<div style="left:150px;top:168px;width:1px;height:16px;background:#a7abb0"></div>
<div style="left:77px;top:166px;font-family:'Liberation Sans', sans-serif;font-size:13px;line-height:20px;color:#333;white-space:pre;width:73px;text-align:center;">B</div>
<div style="left:237px;top:168px;width:1px;height:16px;background:#a7abb0"></div>
<div style="left:151px;top:166px;font-family:'Liberation Sans', sans-serif;font-size:13px;line-height:20px;color:#333;white-space:pre;width:86px;text-align:center;">C</div>
<div style="left:301px;top:168px;width:1px;height:16px;background:#a7abb0"></div>
<div style="left:238px;top:166px;font-family:'Liberation Sans', sans-serif;font-size:13px;line-height:20px;color:#333;white-space:pre;width:63px;text-align:center;">D</div>
<div style="left:365px;top:168px;width:1px;height:16px;background:#a7abb0"></div>
<div style="left:302px;top:166px;font-family:'Liberation Sans', sans-serif;font-size:13px;line-height:20px;color:#333;white-space:pre;width:63px;text-align:center;">E</div>
<div style="left:615px;top:168px;width:1px;height:16px;background:#a7abb0"></div>
<div style="left:366px;top:166px;font-family:'Liberation Sans', sans-serif;font-size:13px;line-height:20px;color:#333;white-space:pre;width:249px;text-align:center;">F</div>
<div style="left:823px;top:168px;width:1px;height:16px;background:#a7abb0"></div>
<div style="left:616px;top:166px;font-family:'Liberation Sans', sans-serif;font-size:13px;line-height:20px;color:#333;white-space:pre;width:207px;text-align:center;">G</div>
<div style="left:887px;top:168px;width:1px;height:16px;background:#a7abb0"></div>
<div style="left:824px;top:166px;font-family:'Liberation Sans', sans-serif;font-size:13px;line-height:20px;color:#333;white-space:pre;width:63px;text-align:center;">H</div>
<div style="left:951px;top:168px;width:1px;height:16px;background:#a7abb0"></div>
<div style="left:888px;top:166px;font-family:'Liberation Sans', sans-serif;font-size:13px;line-height:20px;color:#333;white-space:pre;width:63px;text-align:center;">I</div>
<div style="left:1040px;top:168px;width:1px;height:16px;background:#a7abb0"></div>
<div style="left:952px;top:166px;font-family:'Liberation Sans', sans-serif;font-size:13px;line-height:20px;color:#333;white-space:pre;width:88px;text-align:center;">J</div>
<div style="left:1168px;top:168px;width:1px;height:16px;background:#a7abb0"></div>
<div style="left:1041px;top:166px;font-family:'Liberation Sans', sans-serif;font-size:13px;line-height:20px;color:#333;white-space:pre;width:127px;text-align:center;">K</div>
<div style="left:1169px;top:166px;font-family:'Liberation Sans', sans-serif;font-size:13px;line-height:20px;color:#333;white-space:pre;width:96px;text-align:center;">L</div>
<div style="left:1266px;top:166px;font-family:'Liberation Sans', sans-serif;font-size:13px;line-height:20px;color:#333;white-space:pre;width:134px;text-align:center;">M</div>
<div style="left:8px;top:201px;width:25px;height:1px;background:#a7abb0"></div>
<div style="left:8px;top:184px;font-family:'Liberation Sans', sans-serif;font-size:13px;line-height:20px;color:#333;white-space:pre;width:26px;text-align:center;">5</div>
<div style="left:8px;top:218px;width:25px;height:1px;background:#a7abb0"></div>
<div style="left:8px;top:201px;font-family:'Liberation Sans', sans-serif;font-size:13px;line-height:20px;color:#333;white-space:pre;width:26px;text-align:center;">6</div>
<div style="left:8px;top:235px;width:25px;height:1px;background:#a7abb0"></div>
<div style="left:8px;top:218px;font-family:'Liberation Sans', sans-serif;font-size:13px;line-height:20px;color:#333;white-space:pre;width:26px;text-align:center;">7</div>
<div style="left:8px;top:252px;width:25px;height:1px;background:#a7abb0"></div>
<div style="left:8px;top:235px;font-family:'Liberation Sans', sans-serif;font-size:13px;line-height:20px;color:#333;white-space:pre;width:26px;text-align:center;">8</div>
<div style="left:8px;top:269px;width:25px;height:1px;background:#a7abb0"></div>
<div style="left:8px;top:252px;font-family:'Liberation Sans', sans-serif;font-size:13px;line-height:20px;color:#333;white-space:pre;width:26px;text-align:center;">9</div>
<div style="left:8px;top:286px;width:25px;height:1px;background:#a7abb0"></div>
<div style="left:8px;top:269px;font-family:'Liberation Sans', sans-serif;font-size:13px;line-height:20px;color:#333;white-space:pre;width:26px;text-align:center;">10</div>
<div style="left:8px;top:303px;width:25px;height:1px;background:#a7abb0"></div>
<div style="left:8px;top:286px;font-family:'Liberation Sans', sans-serif;font-size:13px;line-height:20px;color:#333;white-space:pre;width:26px;text-align:center;">11</div>
<div style="left:8px;top:320px;width:25px;height:1px;background:#a7abb0"></div>
<div style="left:8px;top:303px;font-family:'Liberation Sans', sans-serif;font-size:13px;line-height:20px;color:#333;white-space:pre;width:26px;text-align:center;">12</div>
<div style="left:8px;top:337px;width:25px;height:1px;background:#a7abb0"></div>
<div style="left:8px;top:320px;font-family:'Liberation Sans', sans-serif;font-size:13px;line-height:20px;color:#333;white-space:pre;width:26px;text-align:center;">13</div>
<div style="left:8px;top:354px;width:25px;height:1px;background:#a7abb0"></div>
<div style="left:8px;top:337px;font-family:'Liberation Sans', sans-serif;font-size:13px;line-height:20px;color:#333;white-space:pre;width:26px;text-align:center;">14</div>
<div style="left:8px;top:371px;width:25px;height:1px;background:#a7abb0"></div>
<div style="left:8px;top:354px;font-family:'Liberation Sans', sans-serif;font-size:13px;line-height:20px;color:#333;white-space:pre;width:26px;text-align:center;">15</div>
<div style="left:8px;top:409px;width:25px;height:1px;background:#a7abb0"></div>
<div style="left:8px;top:392px;font-family:'Liberation Sans', sans-serif;font-size:13px;line-height:20px;color:#333;white-space:pre;width:26px;text-align:center;">16</div>
<div style="left:8px;top:426px;width:25px;height:1px;background:#a7abb0"></div>
<div style="left:8px;top:409px;font-family:'Liberation Sans', sans-serif;font-size:13px;line-height:20px;color:#333;white-space:pre;width:26px;text-align:center;">17</div>
<div style="left:8px;top:443px;width:25px;height:1px;background:#a7abb0"></div>
<div style="left:8px;top:426px;font-family:'Liberation Sans', sans-serif;font-size:13px;line-height:20px;color:#333;white-space:pre;width:26px;text-align:center;">18</div>
<div style="left:8px;top:464px;width:25px;height:1px;background:#a7abb0"></div>
<div style="left:8px;top:447px;font-family:'Liberation Sans', sans-serif;font-size:13px;line-height:20px;color:#333;white-space:pre;width:26px;text-align:center;">19</div>
<div style="left:8px;top:481px;width:25px;height:1px;background:#a7abb0"></div>
<div style="left:8px;top:464px;font-family:'Liberation Sans', sans-serif;font-size:13px;line-height:20px;color:#333;white-space:pre;width:26px;text-align:center;">20</div>
<div style="left:8px;top:482px;width:25px;height:64px;background:#fbd55e"></div>
<div style="left:8px;top:545px;width:25px;height:1px;background:#c99a2e"></div>
<div style="left:33px;top:482px;width:1px;height:64px;background:#c99a2e"></div>
<div style="left:8px;top:528px;font-family:'Liberation Sans', sans-serif;font-size:13px;line-height:20px;color:#333;white-space:pre;width:26px;text-align:center;">21</div>
<div style="left:8px;top:546px;width:25px;height:64px;background:#fbd55e"></div>
<div style="left:8px;top:609px;width:25px;height:1px;background:#c99a2e"></div>
<div style="left:33px;top:546px;width:1px;height:64px;background:#c99a2e"></div>
<div style="left:8px;top:592px;font-family:'Liberation Sans', sans-serif;font-size:13px;line-height:20px;color:#333;white-space:pre;width:26px;text-align:center;">22</div>
<div style="left:8px;top:610px;width:25px;height:64px;background:#fbd55e"></div>
<div style="left:8px;top:673px;width:25px;height:1px;background:#c99a2e"></div>
<div style="left:33px;top:610px;width:1px;height:64px;background:#c99a2e"></div>
<div style="left:8px;top:656px;font-family:'Liberation Sans', sans-serif;font-size:13px;line-height:20px;color:#333;white-space:pre;width:26px;text-align:center;">23</div>
<div style="left:8px;top:674px;width:25px;height:64px;background:#fbd55e"></div>
<div style="left:8px;top:737px;width:25px;height:1px;background:#c99a2e"></div>
<div style="left:33px;top:674px;width:1px;height:64px;background:#c99a2e"></div>
<div style="left:8px;top:720px;font-family:'Liberation Sans', sans-serif;font-size:13px;line-height:20px;color:#333;white-space:pre;width:26px;text-align:center;">24</div>
<div style="left:8px;top:738px;width:25px;height:46px;background:#fbd55e"></div>
<div style="left:8px;top:801px;width:25px;height:1px;background:#c99a2e"></div>
<div style="left:33px;top:738px;width:1px;height:46px;background:#c99a2e"></div>
<div style="left:34px;top:185px;width:1260px;height:598px;background:#fff"></div>
<div style="left:1170px;top:546px;width:95px;height:237px;background:#b9d9fb"></div>
<div style="left:1266px;top:483px;width:28px;height:300px;background:#b9d9fb"></div>
<div style="left:76px;top:185px;width:1px;height:598px;background:#dadada"></div>
<div style="left:150px;top:185px;width:1px;height:598px;background:#dadada"></div>
<div style="left:237px;top:185px;width:1px;height:598px;background:#dadada"></div>
<div style="left:301px;top:185px;width:1px;height:598px;background:#dadada"></div>
<div style="left:365px;top:185px;width:1px;height:598px;background:#dadada"></div>
<div style="left:615px;top:185px;width:1px;height:598px;background:#dadada"></div>
<div style="left:823px;top:185px;width:1px;height:598px;background:#dadada"></div>
<div style="left:887px;top:185px;width:1px;height:598px;background:#dadada"></div>
<div style="left:951px;top:185px;width:1px;height:598px;background:#dadada"></div>
<div style="left:1040px;top:185px;width:1px;height:598px;background:#dadada"></div>
<div style="left:1168px;top:185px;width:1px;height:598px;background:#dadada"></div>
<div style="left:1265px;top:185px;width:1px;height:598px;background:#dadada"></div>
<div style="left:34px;top:201px;width:1260px;height:1px;background:#dadada"></div>
<div style="left:34px;top:218px;width:1260px;height:1px;background:#dadada"></div>
<div style="left:34px;top:235px;width:1260px;height:1px;background:#dadada"></div>
<div style="left:34px;top:252px;width:1260px;height:1px;background:#dadada"></div>
<div style="left:34px;top:269px;width:1260px;height:1px;background:#dadada"></div>
<div style="left:34px;top:286px;width:1260px;height:1px;background:#dadada"></div>
<div style="left:34px;top:303px;width:1260px;height:1px;background:#dadada"></div>
<div style="left:34px;top:320px;width:1260px;height:1px;background:#dadada"></div>
<div style="left:34px;top:337px;width:1260px;height:1px;background:#dadada"></div>
<div style="left:34px;top:354px;width:1260px;height:1px;background:#dadada"></div>
<div style="left:34px;top:371px;width:1260px;height:1px;background:#dadada"></div>
<div style="left:34px;top:409px;width:1260px;height:1px;background:#dadada"></div>
<div style="left:34px;top:426px;width:1260px;height:1px;background:#dadada"></div>
<div style="left:34px;top:443px;width:1260px;height:1px;background:#dadada"></div>
<div style="left:34px;top:464px;width:1260px;height:1px;background:#dadada"></div>
<div style="left:34px;top:481px;width:1260px;height:1px;background:#dadada"></div>
<div style="left:34px;top:545px;width:1260px;height:1px;background:#dadada"></div>
<div style="left:34px;top:609px;width:1260px;height:1px;background:#dadada"></div>
<div style="left:34px;top:673px;width:1260px;height:1px;background:#dadada"></div>
<div style="left:34px;top:737px;width:1260px;height:1px;background:#dadada"></div>
<div style="left:366px;top:253px;width:521px;height:84px;background:#fff"></div>
<div style="left:888px;top:253px;width:406px;height:84px;background:#fff"></div>
<div style="left:34px;top:355px;width:42px;height:109px;background:#fff"></div>
<div style="left:77px;top:355px;width:73px;height:109px;background:#fff"></div>
<div style="left:151px;top:355px;width:86px;height:109px;background:#fff"></div>
<div style="left:238px;top:355px;width:63px;height:109px;background:#fff"></div>
<div style="left:302px;top:355px;width:992px;height:16px;background:#fff"></div>
<div style="left:302px;top:372px;width:63px;height:92px;background:#fff"></div>
<div style="left:366px;top:372px;width:249px;height:92px;background:#fff"></div>
<div style="left:616px;top:372px;width:207px;height:92px;background:#fff"></div>
<div style="left:824px;top:372px;width:63px;height:92px;background:#fff"></div>
<div style="left:888px;top:372px;width:63px;height:92px;background:#fff"></div>
<div style="left:952px;top:372px;width:88px;height:92px;background:#fff"></div>
<div style="left:1041px;top:372px;width:127px;height:92px;background:#fff"></div>
<div style="left:1169px;top:372px;width:125px;height:37px;background:#fff"></div>
<div style="left:1169px;top:410px;width:96px;height:54px;background:#fff"></div>
<div style="left:1266px;top:410px;width:28px;height:54px;background:#fff"></div>
<div style="left:365px;top:252px;width:929px;height:1px;background:#000"></div>
<div style="left:365px;top:269px;width:929px;height:1px;background:#000"></div>
<div style="left:365px;top:286px;width:929px;height:1px;background:#000"></div>
<div style="left:365px;top:303px;width:929px;height:1px;background:#000"></div>
<div style="left:365px;top:320px;width:929px;height:1px;background:#000"></div>
<div style="left:365px;top:337px;width:929px;height:1px;background:#000"></div>
<div style="left:365px;top:252px;width:1px;height:86px;background:#000"></div>
<div style="left:887px;top:252px;width:1px;height:86px;background:#000"></div>
<div style="left:34px;top:354px;width:1260px;height:1px;background:#000"></div>
<div style="left:301px;top:371px;width:993px;height:1px;background:#000"></div>
<div style="left:1168px;top:409px;width:126px;height:1px;background:#000"></div>
<div style="left:34px;top:464px;width:1260px;height:1px;background:#000"></div>
<div style="left:34px;top:481px;width:1260px;height:1px;background:#000"></div>
<div style="left:34px;top:545px;width:1260px;height:1px;background:#000"></div>
<div style="left:34px;top:609px;width:1260px;height:1px;background:#000"></div>
<div style="left:34px;top:673px;width:1260px;height:1px;background:#000"></div>
<div style="left:34px;top:737px;width:1260px;height:1px;background:#000"></div>
<div style="left:76px;top:354px;width:1px;height:429px;background:#000"></div>
<div style="left:150px;top:354px;width:1px;height:429px;background:#000"></div>
<div style="left:237px;top:354px;width:1px;height:429px;background:#000"></div>
<div style="left:301px;top:354px;width:1px;height:429px;background:#000"></div>
<div style="left:365px;top:371px;width:1px;height:412px;background:#000"></div>
<div style="left:615px;top:371px;width:1px;height:412px;background:#000"></div>
<div style="left:823px;top:371px;width:1px;height:412px;background:#000"></div>
<div style="left:887px;top:371px;width:1px;height:412px;background:#000"></div>
<div style="left:951px;top:371px;width:1px;height:412px;background:#000"></div>
<div style="left:1040px;top:371px;width:1px;height:412px;background:#000"></div>
<div style="left:1168px;top:371px;width:1px;height:412px;background:#000"></div>
<div style="left:1265px;top:409px;width:1px;height:374px;background:#000"></div>
<div style="left:1169px;top:609px;width:125px;height:1px;background:#0f2d52"></div>
<div style="left:1169px;top:673px;width:125px;height:1px;background:#0f2d52"></div>
<div style="left:1169px;top:737px;width:125px;height:1px;background:#0f2d52"></div>
<div style="left:1266px;top:545px;width:28px;height:1px;background:#0f2d52"></div>
<div style="left:1265px;top:546px;width:1px;height:237px;background:#0f2d52"></div>
<div style="left:1265px;top:482px;width:1px;height:63px;background:#0f2d52"></div>
<div style="left:1167px;top:480px;width:1px;height:303px;background:#000"></div>
<div style="left:1168px;top:481px;width:1px;height:302px;background:#fff"></div>
<div style="left:1169px;top:482px;width:1px;height:301px;background:#000"></div>
<div style="left:1167px;top:480px;width:127px;height:1px;background:#000"></div>
<div style="left:1168px;top:481px;width:126px;height:1px;background:#fff"></div>
<div style="left:1169px;top:482px;width:125px;height:1px;background:#000"></div>
<div style="left:1170px;top:545px;width:95px;height:1px;background:#000"></div>
<div style="left:1265px;top:483px;width:1px;height:62px;background:#0f2d52"></div>
<svg style="left:1041px;top:482px;" width="6" height="6" viewBox="0 0 6 6"><path d="M0 0H6L0 6Z" fill="#1e8a2e"/></svg>
<svg style="left:1041px;top:546px;" width="6" height="6" viewBox="0 0 6 6"><path d="M0 0H6L0 6Z" fill="#1e8a2e"/></svg>
<svg style="left:1041px;top:610px;" width="6" height="6" viewBox="0 0 6 6"><path d="M0 0H6L0 6Z" fill="#1e8a2e"/></svg>
<svg style="left:1041px;top:674px;" width="6" height="6" viewBox="0 0 6 6"><path d="M0 0H6L0 6Z" fill="#1e8a2e"/></svg>
<svg style="left:1041px;top:738px;" width="6" height="6" viewBox="0 0 6 6"><path d="M0 0H6L0 6Z" fill="#1e8a2e"/></svg>
<div style="left:368px;top:252px;font-family:'Liberation Serif', serif;font-size:12px;line-height:20px;color:#000;white-space:pre;">Наименование заказчика (структурного подразделения)</div>
<div style="left:888px;top:252px;font-family:'Liberation Serif', serif;font-size:12px;line-height:20px;color:#000;white-space:pre;width:512px;text-align:center;">ФГБОУ ВПО "ИГУ"</div>
<div style="left:368px;top:269px;font-family:'Liberation Serif', serif;font-size:12px;line-height:20px;color:#000;white-space:pre;">Юридический адрес, телефон, электронная почта заказчика</div>
<div style="left:368px;top:286px;font-family:'Liberation Serif', serif;font-size:12px;line-height:20px;color:#000;white-space:pre;">ИНН</div>
<div style="left:888px;top:286px;font-family:'Liberation Serif', serif;font-size:12px;line-height:20px;color:#000;white-space:pre;width:512px;text-align:center;">3808013278</div>
<div style="left:368px;top:303px;font-family:'Liberation Serif', serif;font-size:12px;line-height:20px;color:#000;white-space:pre;">КПП</div>
<div style="left:888px;top:303px;font-family:'Liberation Serif', serif;font-size:12px;line-height:20px;color:#000;white-space:pre;width:512px;text-align:center;">380402001</div>
<div style="left:368px;top:320px;font-family:'Liberation Serif', serif;font-size:12px;line-height:20px;color:#000;white-space:pre;">ОКАТО</div>
<div style="left:888px;top:320px;font-family:'Liberation Serif', serif;font-size:12px;line-height:20px;color:#000;white-space:pre;width:512px;text-align:center;">25714000</div>
<div style="left:888px;top:0;width:406px;height:783px;overflow:hidden">
<div style="left:29px;top:269px;font-family:'Liberation Serif', serif;font-size:12px;line-height:20px;color:#000;white-space:pre;letter-spacing:0.17px;">664003 Иркутская область, г.Иркутск, ул. К. Маркса, 1, (3952) 521502, uprav@isu.ru</div>
</div>
<div style="left:34px;top:353.0px;font-family:'Liberation Serif', serif;font-size:12px;line-height:20px;color:#000;white-space:pre;width:42px;text-align:center;">Поряд</div>
<div style="left:34px;top:368.75px;font-family:'Liberation Serif', serif;font-size:12px;line-height:20px;color:#000;white-space:pre;width:42px;text-align:center;">ковый</div>
<div style="left:34px;top:384.5px;font-family:'Liberation Serif', serif;font-size:12px;line-height:20px;color:#000;white-space:pre;width:42px;text-align:center;">номер</div>
<div style="left:77px;top:353px;font-family:'Liberation Serif', serif;font-size:12px;line-height:20px;color:#000;white-space:pre;width:73px;text-align:center;">КБК</div>
<div style="left:151px;top:353px;font-family:'Liberation Serif', serif;font-size:12px;line-height:20px;color:#000;white-space:pre;width:86px;text-align:center;">ОКВЭД</div>
<div style="left:238px;top:353px;font-family:'Liberation Serif', serif;font-size:12px;line-height:20px;color:#000;white-space:pre;width:63px;text-align:center;">ОКПД</div>
<div style="left:302px;top:353px;font-family:'Liberation Serif', serif;font-size:12px;line-height:20px;color:#000;white-space:pre;width:1100px;text-align:center;">Условия контракта</div>
<div style="left:302px;top:370.0px;font-family:'Liberation Serif', serif;font-size:12px;line-height:20px;color:#000;white-space:pre;width:63px;text-align:center;">№ заказа</div>
<div style="left:302px;top:385.9px;font-family:'Liberation Serif', serif;font-size:12px;line-height:20px;color:#000;white-space:pre;width:63px;text-align:center;">(№ лота)</div>
<div style="left:366px;top:370.0px;font-family:'Liberation Serif', serif;font-size:12px;line-height:20px;color:#000;white-space:pre;width:249px;text-align:center;">Наименование предмета контракта</div>
<div style="left:616px;top:370.0px;font-family:'Liberation Serif', serif;font-size:12px;line-height:20px;color:#000;white-space:pre;width:207px;text-align:center;">Минимально необходимые требования,</div>
<div style="left:616px;top:385.9px;font-family:'Liberation Serif', serif;font-size:12px;line-height:20px;color:#000;white-space:pre;width:207px;text-align:center;">предъявляемые к предмету контракта</div>
<div style="left:824px;top:370.0px;font-family:'Liberation Serif', serif;font-size:12px;line-height:20px;color:#000;white-space:pre;width:63px;text-align:center;">Единица</div>
<div style="left:824px;top:385.9px;font-family:'Liberation Serif', serif;font-size:12px;line-height:20px;color:#000;white-space:pre;width:63px;text-align:center;">измерения</div>
<div style="left:888px;top:370.0px;font-family:'Liberation Serif', serif;font-size:12px;line-height:20px;color:#000;white-space:pre;width:63px;text-align:center;">Количество</div>
<div style="left:888px;top:385.9px;font-family:'Liberation Serif', serif;font-size:12px;line-height:20px;color:#000;white-space:pre;width:63px;text-align:center;">(объем)</div>
<div style="left:952px;top:370.0px;font-family:'Liberation Serif', serif;font-size:12px;line-height:20px;color:#000;white-space:pre;width:88px;text-align:center;">Ориентировочн</div>
<div style="left:952px;top:385.9px;font-family:'Liberation Serif', serif;font-size:12px;line-height:20px;color:#000;white-space:pre;width:88px;text-align:center;">ая начальная</div>
<div style="left:952px;top:401.8px;font-family:'Liberation Serif', serif;font-size:12px;line-height:20px;color:#000;white-space:pre;width:88px;text-align:center;">(максимальная)</div>
<div style="left:952px;top:417.7px;font-family:'Liberation Serif', serif;font-size:12px;line-height:20px;color:#000;white-space:pre;width:88px;text-align:center;">цена контракта</div>
<div style="left:1041px;top:370.0px;font-family:'Liberation Serif', serif;font-size:12px;line-height:20px;color:#000;white-space:pre;width:127px;text-align:center;">Условия финансового</div>
<div style="left:1041px;top:385.9px;font-family:'Liberation Serif', serif;font-size:12px;line-height:20px;color:#000;white-space:pre;width:127px;text-align:center;">обеспечения исполнения</div>
<div style="left:1041px;top:401.8px;font-family:'Liberation Serif', serif;font-size:12px;line-height:20px;color:#000;white-space:pre;width:127px;text-align:center;">контракта (включая</div>
<div style="left:1041px;top:417.7px;font-family:'Liberation Serif', serif;font-size:12px;line-height:20px;color:#000;white-space:pre;width:127px;text-align:center;">размер аванса)</div>
<div style="left:1169px;top:0;width:125px;height:783px;overflow:hidden">
<div style="left:56px;top:370px;font-family:'Liberation Serif', serif;font-size:12px;line-height:20px;color:#000;white-space:pre;">График осуществления</div>
<div style="left:72px;top:386px;font-family:'Liberation Serif', serif;font-size:12px;line-height:20px;color:#000;white-space:pre;">процедур</div>
<div style="left:0px;top:408.0px;font-family:'Liberation Serif', serif;font-size:12px;line-height:20px;color:#000;white-space:pre;width:96px;text-align:center;">Срок размещения</div>
<div style="left:0px;top:423.9px;font-family:'Liberation Serif', serif;font-size:12px;line-height:20px;color:#000;white-space:pre;width:96px;text-align:center;">заказа (месяц,</div>
<div style="left:0px;top:439.8px;font-family:'Liberation Serif', serif;font-size:12px;line-height:20px;color:#000;white-space:pre;width:96px;text-align:center;">год)</div>
<div style="left:97px;top:408.0px;font-family:'Liberation Serif', serif;font-size:12px;line-height:20px;color:#000;white-space:pre;width:136px;text-align:center;">Срок исполнения</div>
<div style="left:97px;top:423.9px;font-family:'Liberation Serif', serif;font-size:12px;line-height:20px;color:#000;white-space:pre;width:136px;text-align:center;">контракта (месяц, год)</div>
</div>
<div style="left:77px;top:464px;font-family:'Liberation Serif', serif;font-size:12px;line-height:20px;color:#000;white-space:pre;width:73px;text-align:center;">1</div>
<div style="left:151px;top:464px;font-family:'Liberation Serif', serif;font-size:12px;line-height:20px;color:#000;white-space:pre;width:86px;text-align:center;">2</div>
<div style="left:238px;top:464px;font-family:'Liberation Serif', serif;font-size:12px;line-height:20px;color:#000;white-space:pre;width:63px;text-align:center;">3</div>
<div style="left:302px;top:464px;font-family:'Liberation Serif', serif;font-size:12px;line-height:20px;color:#000;white-space:pre;width:63px;text-align:center;">4</div>
<div style="left:366px;top:464px;font-family:'Liberation Serif', serif;font-size:12px;line-height:20px;color:#000;white-space:pre;width:249px;text-align:center;">5</div>
<div style="left:616px;top:464px;font-family:'Liberation Serif', serif;font-size:12px;line-height:20px;color:#000;white-space:pre;width:207px;text-align:center;">6</div>
<div style="left:824px;top:464px;font-family:'Liberation Serif', serif;font-size:12px;line-height:20px;color:#000;white-space:pre;width:63px;text-align:center;">7</div>
<div style="left:888px;top:464px;font-family:'Liberation Serif', serif;font-size:12px;line-height:20px;color:#000;white-space:pre;width:63px;text-align:center;">8</div>
<div style="left:952px;top:464px;font-family:'Liberation Serif', serif;font-size:12px;line-height:20px;color:#000;white-space:pre;width:88px;text-align:center;">9</div>
<div style="left:1041px;top:464px;font-family:'Liberation Serif', serif;font-size:12px;line-height:20px;color:#000;white-space:pre;width:127px;text-align:center;">10</div>
<div style="left:1169px;top:464px;font-family:'Liberation Serif', serif;font-size:12px;line-height:20px;color:#000;white-space:pre;width:96px;text-align:center;">12</div>
<div style="left:34px;top:528px;font-family:'Liberation Serif', serif;font-size:12px;line-height:20px;color:#000;white-space:pre;width:42px;text-align:center;">1</div>
<div style="left:77px;top:528px;font-family:'Liberation Serif', serif;font-size:12px;line-height:20px;color:#000;white-space:pre;width:73px;text-align:center;">226</div>
<div style="left:151px;top:528px;font-family:'Liberation Serif', serif;font-size:12px;line-height:20px;color:#000;white-space:pre;width:86px;text-align:center;">91.33</div>
<div style="left:238px;top:528px;font-family:'Liberation Serif', serif;font-size:12px;line-height:20px;color:#000;white-space:pre;width:63px;text-align:center;">9249020</div>
<div style="left:302px;top:528px;font-family:'Liberation Serif', serif;font-size:12px;line-height:20px;color:#000;white-space:pre;width:63px;text-align:center;">17</div>
<div style="left:366px;top:528.0px;font-family:'Liberation Serif', serif;font-size:12px;line-height:20px;color:#000;white-space:pre;width:249px;text-align:center;">"Байкальские чтения" - 2015</div>
<div style="left:616px;top:528px;font-family:'Liberation Serif', serif;font-size:12px;line-height:20px;color:#000;white-space:pre;width:207px;text-align:center;">согласно ТЗ</div>
<div style="left:824px;top:528px;font-family:'Liberation Serif', serif;font-size:12px;line-height:20px;color:#000;white-space:pre;width:63px;text-align:center;">Штука</div>
<div style="left:888px;top:528px;font-family:'Liberation Serif', serif;font-size:12px;line-height:20px;color:#000;white-space:pre;width:63px;text-align:center;">1</div>
<div style="left:952px;top:528px;font-family:'Liberation Serif', serif;font-size:12px;line-height:20px;color:#000;white-space:pre;width:88px;text-align:center;">200</div>
<div style="left:1041px;top:528px;font-family:'Liberation Serif', serif;font-size:12px;line-height:20px;color:#000;white-space:pre;width:127px;text-align:center;">5%</div>
<div style="left:1169px;top:528px;font-family:'Liberation Serif', serif;font-size:12px;line-height:20px;color:#000;white-space:pre;width:96px;text-align:center;">апрель</div>
<div style="left:34px;top:592px;font-family:'Liberation Serif', serif;font-size:12px;line-height:20px;color:#000;white-space:pre;width:42px;text-align:center;">2</div>
<div style="left:77px;top:592px;font-family:'Liberation Serif', serif;font-size:12px;line-height:20px;color:#000;white-space:pre;width:73px;text-align:center;">226</div>
<div style="left:151px;top:592px;font-family:'Liberation Serif', serif;font-size:12px;line-height:20px;color:#000;white-space:pre;width:86px;text-align:center;">91.33</div>
<div style="left:238px;top:592px;font-family:'Liberation Serif', serif;font-size:12px;line-height:20px;color:#000;white-space:pre;width:63px;text-align:center;">9249020</div>
<div style="left:302px;top:592px;font-family:'Liberation Serif', serif;font-size:12px;line-height:20px;color:#000;white-space:pre;width:63px;text-align:center;">18</div>
<div style="left:366px;top:592.0px;font-family:'Liberation Serif', serif;font-size:12px;line-height:20px;color:#000;white-space:pre;width:249px;text-align:center;">"Лица ИГУ" - 2015</div>
<div style="left:616px;top:592px;font-family:'Liberation Serif', serif;font-size:12px;line-height:20px;color:#000;white-space:pre;width:207px;text-align:center;">согласно ТЗ</div>
<div style="left:824px;top:592px;font-family:'Liberation Serif', serif;font-size:12px;line-height:20px;color:#000;white-space:pre;width:63px;text-align:center;">Штука</div>
<div style="left:888px;top:592px;font-family:'Liberation Serif', serif;font-size:12px;line-height:20px;color:#000;white-space:pre;width:63px;text-align:center;">1</div>
<div style="left:952px;top:592px;font-family:'Liberation Serif', serif;font-size:12px;line-height:20px;color:#000;white-space:pre;width:88px;text-align:center;">550</div>
<div style="left:1041px;top:592px;font-family:'Liberation Serif', serif;font-size:12px;line-height:20px;color:#000;white-space:pre;width:127px;text-align:center;">5%</div>
<div style="left:1169px;top:592px;font-family:'Liberation Serif', serif;font-size:12px;line-height:20px;color:#000;white-space:pre;width:96px;text-align:center;">июль</div>
<div style="left:34px;top:656px;font-family:'Liberation Serif', serif;font-size:12px;line-height:20px;color:#000;white-space:pre;width:42px;text-align:center;">3</div>
<div style="left:77px;top:656px;font-family:'Liberation Serif', serif;font-size:12px;line-height:20px;color:#000;white-space:pre;width:73px;text-align:center;">226</div>
<div style="left:151px;top:656px;font-family:'Liberation Serif', serif;font-size:12px;line-height:20px;color:#000;white-space:pre;width:86px;text-align:center;">91.33</div>
<div style="left:238px;top:656px;font-family:'Liberation Serif', serif;font-size:12px;line-height:20px;color:#000;white-space:pre;width:63px;text-align:center;">9249020</div>
<div style="left:302px;top:656px;font-family:'Liberation Serif', serif;font-size:12px;line-height:20px;color:#000;white-space:pre;width:63px;text-align:center;">15</div>
<div style="left:366px;top:656.0px;font-family:'Liberation Serif', serif;font-size:12px;line-height:20px;color:#000;white-space:pre;width:249px;text-align:center;">"Недели науки ИГУ" - 2015</div>
<div style="left:616px;top:656px;font-family:'Liberation Serif', serif;font-size:12px;line-height:20px;color:#000;white-space:pre;width:207px;text-align:center;">согласно ТЗ</div>
<div style="left:824px;top:656px;font-family:'Liberation Serif', serif;font-size:12px;line-height:20px;color:#000;white-space:pre;width:63px;text-align:center;">Штука</div>
<div style="left:888px;top:656px;font-family:'Liberation Serif', serif;font-size:12px;line-height:20px;color:#000;white-space:pre;width:63px;text-align:center;">1</div>
<div style="left:952px;top:656px;font-family:'Liberation Serif', serif;font-size:12px;line-height:20px;color:#000;white-space:pre;width:88px;text-align:center;">500</div>
<div style="left:1041px;top:656px;font-family:'Liberation Serif', serif;font-size:12px;line-height:20px;color:#000;white-space:pre;width:127px;text-align:center;">5%</div>
<div style="left:1169px;top:656px;font-family:'Liberation Serif', serif;font-size:12px;line-height:20px;color:#000;white-space:pre;width:96px;text-align:center;">июль</div>
<div style="left:34px;top:720px;font-family:'Liberation Serif', serif;font-size:12px;line-height:20px;color:#000;white-space:pre;width:42px;text-align:center;">4</div>
<div style="left:77px;top:720px;font-family:'Liberation Serif', serif;font-size:12px;line-height:20px;color:#000;white-space:pre;width:73px;text-align:center;">226</div>
<div style="left:151px;top:720px;font-family:'Liberation Serif', serif;font-size:12px;line-height:20px;color:#000;white-space:pre;width:86px;text-align:center;">91.33</div>
<div style="left:238px;top:720px;font-family:'Liberation Serif', serif;font-size:12px;line-height:20px;color:#000;white-space:pre;width:63px;text-align:center;">9249020</div>
<div style="left:302px;top:720px;font-family:'Liberation Serif', serif;font-size:12px;line-height:20px;color:#000;white-space:pre;width:63px;text-align:center;">21</div>
<div style="left:366px;top:704.1px;font-family:'Liberation Serif', serif;font-size:12px;line-height:20px;color:#000;white-space:pre;width:249px;text-align:center;">"Студенческая Школа социального</div>
<div style="left:366px;top:720.0px;font-family:'Liberation Serif', serif;font-size:12px;line-height:20px;color:#000;white-space:pre;width:249px;text-align:center;">предпринимательства" - 2015</div>
<div style="left:616px;top:720px;font-family:'Liberation Serif', serif;font-size:12px;line-height:20px;color:#000;white-space:pre;width:207px;text-align:center;">согласно ТЗ</div>
<div style="left:824px;top:720px;font-family:'Liberation Serif', serif;font-size:12px;line-height:20px;color:#000;white-space:pre;width:63px;text-align:center;">Штука</div>
<div style="left:888px;top:720px;font-family:'Liberation Serif', serif;font-size:12px;line-height:20px;color:#000;white-space:pre;width:63px;text-align:center;">1</div>
<div style="left:952px;top:720px;font-family:'Liberation Serif', serif;font-size:12px;line-height:20px;color:#000;white-space:pre;width:88px;text-align:center;">150</div>
<div style="left:1041px;top:720px;font-family:'Liberation Serif', serif;font-size:12px;line-height:20px;color:#000;white-space:pre;width:127px;text-align:center;">5%</div>
<div style="left:1169px;top:720px;font-family:'Liberation Serif', serif;font-size:12px;line-height:20px;color:#000;white-space:pre;width:96px;text-align:center;">июль</div>
<div style="left:1294px;top:168px;width:16px;height:615px;background:linear-gradient(to right,#dfe2e6,#eceef1 50%,#dfe2e6)"></div>
<div style="left:1295px;top:169px;width:14px;height:7px;background:#fff;border:1px solid #8c9196"></div>
<div style="left:1298px;top:172px;width:8px;height:1px;background:#555"></div>
<svg style="left:1297px;top:181px;" width="10" height="6" viewBox="0 0 10 6"><path d="M0 6L5 1L10 6Z" fill="#4d4d4d"/></svg>
<div style="left:1295px;top:193px;width:14px;height:17px;background:linear-gradient(to right,#f4f5f6,#e3e5e8);border:1px solid #9499a0;border-radius:2px"></div>
<div style="left:1299px;top:198px;width:7px;height:1px;background:#7c8187"></div>
<div style="left:1299px;top:200px;width:7px;height:1px;background:#7c8187"></div>
<div style="left:1299px;top:202px;width:7px;height:1px;background:#7c8187"></div>
<div style="left:1299px;top:204px;width:7px;height:1px;background:#7c8187"></div>
<svg style="left:1297px;top:771px;" width="10" height="6" viewBox="0 0 10 6"><path d="M0 0L5 5L10 0Z" fill="#4d4d4d"/></svg>
<div style="left:8px;top:783px;width:1286px;height:16px;background:#dee2e8;border-top:1px solid #a3a8ae;border-bottom:1px solid #a3a8ae"></div>
<div style="left:8px;top:784px;width:62px;height:14px;background:linear-gradient(#e9ecf0,#dde1e6);border-right:1px solid #c1c6cc"></div>
<svg style="left:13px;top:786px;" width="8" height="9" viewBox="0 0 8 9"><rect x="0" y="0" width="1.6" height="9" fill="#3a3f45"/><path d="M7.5 0V9L2.5 4.5Z" fill="#3a3f45"/></svg>
<svg style="left:29px;top:786px;" width="6" height="9" viewBox="0 0 6 9"><path d="M5.5 0V9L0.5 4.5Z" fill="#3a3f45"/></svg>
<svg style="left:43px;top:786px;" width="6" height="9" viewBox="0 0 6 9"><path d="M0.5 0V9L5.5 4.5Z" fill="#3a3f45"/></svg>
<svg style="left:57px;top:786px;" width="8" height="9" viewBox="0 0 8 9"><path d="M0.5 0V9L5.5 4.5Z" fill="#3a3f45"/><rect x="6.2" y="0" width="1.6" height="9" fill="#3a3f45"/></svg>
<svg style="left:69px;top:783px;" width="100" height="15" viewBox="0 0 100 15"><path d="M0.5 0H65L52 15H0.5Z" fill="#fff"/><path d="M0.5 0V15" stroke="#a3a8ae"/><path d="M52.5 15L65.5 0.5H97.5L84.5 15Z" fill="#dde1e7" stroke="#a0a5ab" stroke-width="1"/><rect x="69.5" y="5.5" width="10" height="8" rx="1" fill="#eef2f8" stroke="#4a6797"/><path d="M71 13.5Q71 15 73 15H77" stroke="#4a6797" fill="none"/><circle cx="68" cy="5" r="2.2" fill="#f7d23a"/><path d="M68 1.2V8.8M64.2 5H71.8M65.3 2.3L70.7 7.7M70.7 2.3L65.3 7.7" stroke="#f0b020" stroke-width="0.9"/></svg>
<div style="left:80px;top:782px;font-family:'Liberation Sans', sans-serif;font-size:13px;line-height:20px;color:#3b3b3b;white-space:pre;font-weight:bold;">Лист2</div>
<div style="left:780px;top:784px;width:8px;height:14px;background:#fff;border:1px solid #9ca1a7;border-radius:1px"></div>
<div style="left:783px;top:787px;width:1px;height:8px;background:#666"></div>
<svg style="left:792px;top:787px;" width="6" height="9" viewBox="0 0 6 9"><path d="M5.5 0V9L0.5 4.5Z" fill="#4d4d4d"/></svg>
<div style="left:805px;top:784px;width:309px;height:14px;background:linear-gradient(to bottom,#f5f6f8,#e4e7eb);border:1px solid #a9aeb4;border-radius:2px"></div>
<div style="left:955px;top:788px;width:1px;height:7px;background:#7c8187"></div>
<div style="left:957px;top:788px;width:1px;height:7px;background:#7c8187"></div>
<div style="left:959px;top:788px;width:1px;height:7px;background:#7c8187"></div>
<div style="left:961px;top:788px;width:1px;height:7px;background:#7c8187"></div>
<svg style="left:1274px;top:787px;" width="6" height="9" viewBox="0 0 6 9"><path d="M0.5 0V9L5.5 4.5Z" fill="#4d4d4d"/></svg>
<div style="left:1286px;top:784px;width:8px;height:14px;background:#fff;border:1px solid #9ca1a7;border-radius:1px"></div>
<div style="left:1289px;top:787px;width:1px;height:8px;background:#666"></div>
<div style="left:1294px;top:783px;width:16px;height:16px;background:#dfe2e6"></div>
<div style="left:8px;top:799px;width:1302px;height:22px;background:linear-gradient(to bottom,#eff1f3 0%,#e3e6e9 40%,#d3d7db 100%)"></div>
<div style="left:16px;top:800px;font-family:'Liberation Sans', sans-serif;font-size:11.3px;line-height:20px;color:#3b3b3b;white-space:pre;">Готово</div>
<div style="left:62px;top:801px;width:1px;height:19px;background:#b9bec4"></div>
<div style="left:97px;top:801px;width:1px;height:19px;background:#b9bec4"></div>
<svg style="left:71px;top:802px;" width="17" height="15" viewBox="0 0 17 15"><rect x="1.5" y="2.5" width="14" height="11.5" fill="#fff" stroke="#3f63a5"/><rect x="2" y="3" width="13" height="3" fill="#6f95d8"/><path d="M3 8H8M9.5 8H14M3 10.5H8M9.5 10.5H14M3 12.5H8M9.5 12.5H14" stroke="#6f95d8" stroke-width="0.9"/><circle cx="4" cy="3" r="2.6" fill="#e23a2a"/></svg>
<div style="left:963px;top:801px;font-family:'Liberation Sans', sans-serif;font-size:11.3px;line-height:20px;color:#3b3b3b;white-space:pre;">Количество: 64</div>
<div style="left:1053px;top:801px;width:1px;height:19px;background:#b9bec4"></div>
<div style="left:1058px;top:801px;width:19px;height:19px;background:linear-gradient(#fde9a6,#f9d46c);border:1px solid #e1b552;border-radius:2px"></div>
<svg style="left:1061px;top:804px;" width="13" height="12" viewBox="0 0 13 12"><rect x="0.5" y="0.5" width="12" height="11" fill="#fff" stroke="#555"/><path d="M0.5 4H12.5M0.5 7.5H12.5M4.5 0.5V11.5M8.5 0.5V11.5" stroke="#555"/></svg>
<svg style="left:1080px;top:803px;" width="14" height="14" viewBox="0 0 14 14"><rect x="0.5" y="0.5" width="13" height="13" fill="#d5d9de" stroke="#5f656c"/><rect x="3.5" y="3" width="7" height="8" fill="#fff" stroke="#6a7078"/></svg>
<svg style="left:1098px;top:803px;" width="15" height="14" viewBox="0 0 15 14"><rect x="0.5" y="0.5" width="14" height="13" fill="#d5d9de" stroke="#5f656c"/><rect x="3" y="2" width="3" height="6" fill="#fff" stroke="#5f656c" stroke-width="0.8"/><rect x="8" y="2" width="4" height="6" fill="#fff" stroke="#5f656c" stroke-width="0.8"/></svg>
<div style="left:1124px;top:801px;font-family:'Liberation Sans', sans-serif;font-size:11.3px;line-height:20px;color:#3b3b3b;white-space:pre;">100%</div>
<svg style="left:1159px;top:802px;" width="16" height="16" viewBox="0 0 16 16"><circle cx="8" cy="8" r="7.2" fill="#f5f6f7" stroke="#7b8188"/><rect x="4" y="7.1" width="8" height="1.8" fill="#333"/></svg>
<div style="left:1175px;top:810px;width:101px;height:1px;background:#a1a6ac"></div>
<div style="left:1175px;top:811px;width:101px;height:1px;background:#f7f8f9"></div>
<svg style="left:1220px;top:803px;" width="11" height="14" viewBox="0 0 11 14"><path d="M0.5 0.5H10.5V9L5.5 13.5L0.5 9Z" fill="#fbfbfc" stroke="#6b7178"/></svg>
<svg style="left:1275px;top:802px;" width="16" height="16" viewBox="0 0 16 16"><circle cx="8" cy="8" r="7.2" fill="#f5f6f7" stroke="#7b8188"/><rect x="4" y="7.1" width="8" height="1.8" fill="#333"/><rect x="7.1" y="4" width="1.8" height="8" fill="#333"/></svg>
<svg style="left:1299px;top:810px;" width="10" height="10" viewBox="0 0 10 10"><g fill="#aeb3b9"><rect x="7" y="1" width="2" height="2"/><rect x="4" y="4" width="2" height="2"/><rect x="7" y="4" width="2" height="2"/><rect x="1" y="7" width="2" height="2"/><rect x="4" y="7" width="2" height="2"/><rect x="7" y="7" width="2" height="2"/></g></svg>
</body></html>
